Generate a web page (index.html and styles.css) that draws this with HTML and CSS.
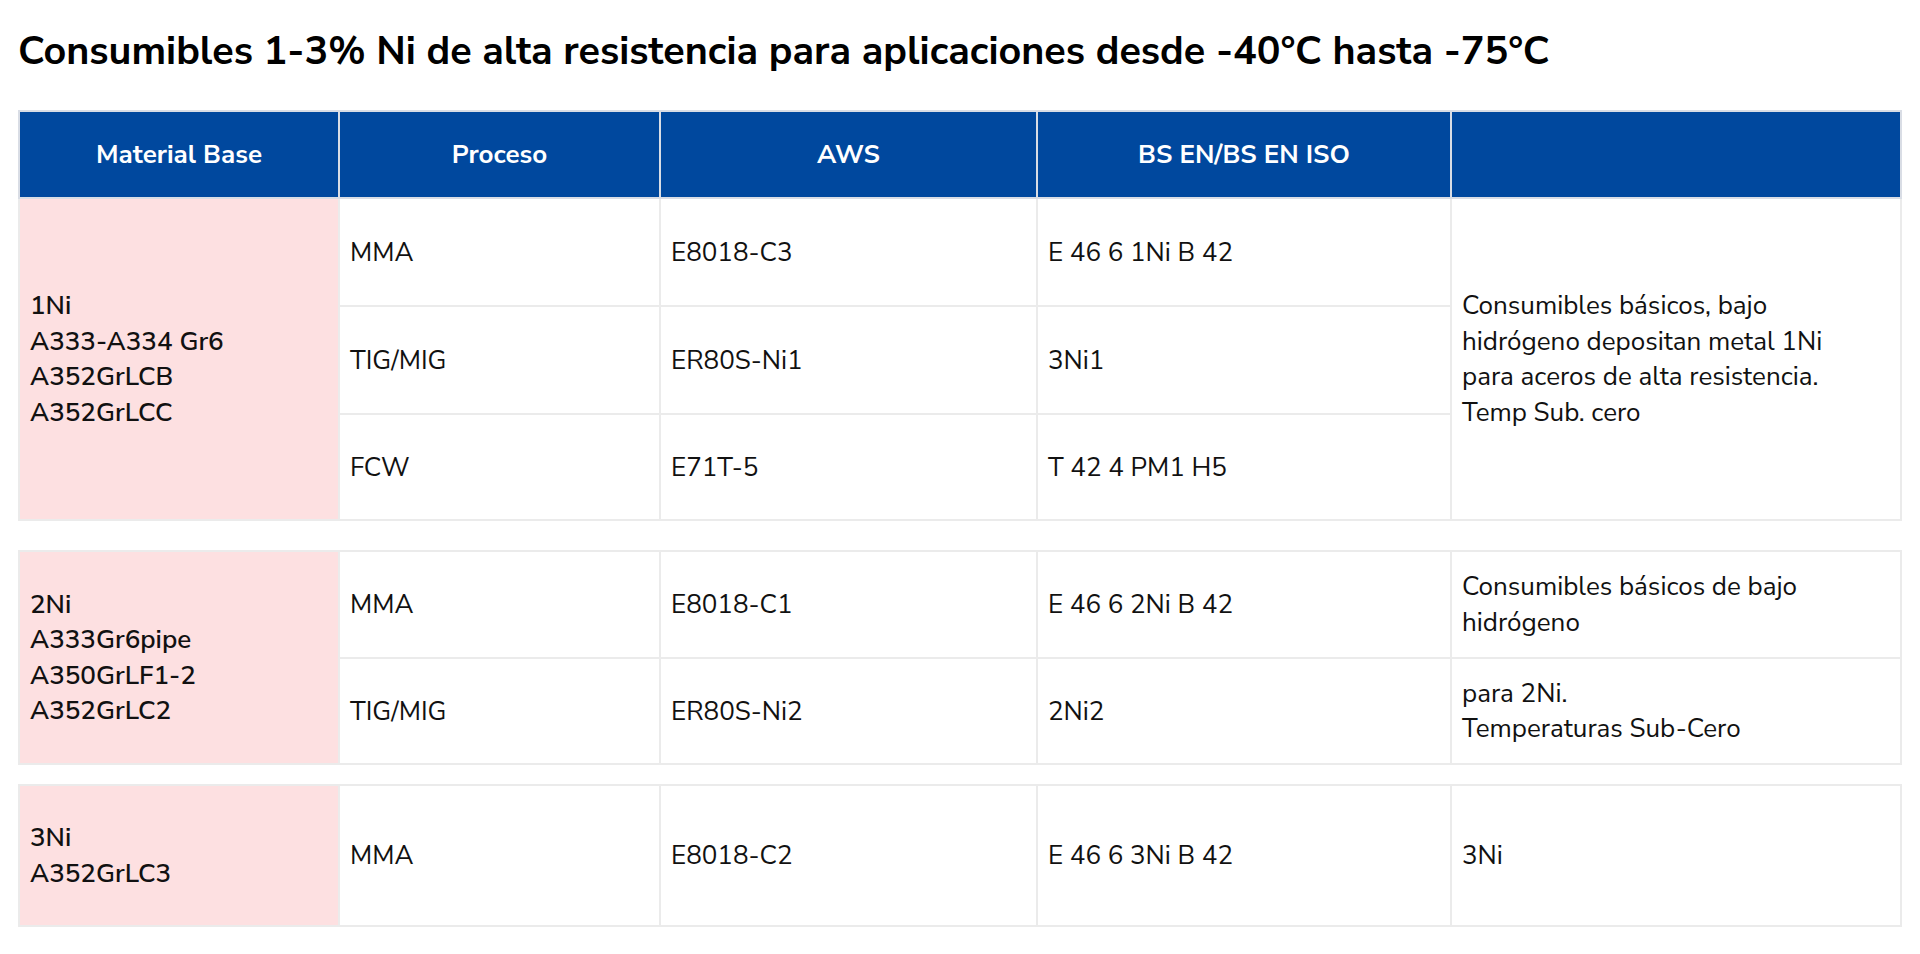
FILE: index.html
```html
<!DOCTYPE html>
<html lang="es">
<head>
<meta charset="utf-8">
<title>Consumibles 1-3% Ni</title>
<link rel="stylesheet" href="styles.css">
</head>
<body>
<main class="page">
  <h1 class="title">Consumibles 1-3% Ni de alta resistencia para aplicaciones desde -40°C hasta -75°C</h1>

  <table class="spec">
    <colgroup>
      <col class="c1"><col class="c2"><col class="c3"><col class="c4"><col class="c5">
    </colgroup>
    <thead>
      <tr class="head-row">
        <th>Material Base</th>
        <th>Proceso</th>
        <th>AWS</th>
        <th>BS EN/BS EN ISO</th>
        <th></th>
      </tr>
    </thead>
    <tbody>
      <tr class="r108">
        <td class="base" rowspan="3">1Ni<br>A333-A334 Gr6<br>A352GrLCB<br>A352GrLCC</td>
        <td>MMA</td>
        <td>E8018-C3</td>
        <td>E 46 6 1Ni B 42</td>
        <td rowspan="3">Consumibles básicos, bajo<br>hidrógeno depositan metal 1Ni<br>para aceros de alta resistencia.<br>Temp Sub. cero</td>
      </tr>
      <tr class="r108">
        <td>TIG/MIG</td>
        <td>ER80S-Ni1</td>
        <td>3Ni1</td>
      </tr>
      <tr class="r106">
        <td>FCW</td>
        <td>E71T-5</td>
        <td>T 42 4 PM1 H5</td>
      </tr>
    </tbody>
  </table>

  <table class="spec group2">
    <colgroup>
      <col class="c1"><col class="c2"><col class="c3"><col class="c4"><col class="c5">
    </colgroup>
    <tbody>
      <tr class="r107">
        <td class="base" rowspan="2">2Ni<br>A333Gr6pipe<br>A350GrLF1-2<br>A352GrLC2</td>
        <td>MMA</td>
        <td>E8018-C1</td>
        <td>E 46 6 2Ni B 42</td>
        <td>Consumibles básicos de bajo<br>hidrógeno</td>
      </tr>
      <tr class="r106">
        <td>TIG/MIG</td>
        <td>ER80S-Ni2</td>
        <td>2Ni2</td>
        <td>para 2Ni.<br>Temperaturas Sub-Cero</td>
      </tr>
    </tbody>
  </table>

  <table class="spec group3">
    <colgroup>
      <col class="c1"><col class="c2"><col class="c3"><col class="c4"><col class="c5">
    </colgroup>
    <tbody>
      <tr class="r141">
        <td class="base">3Ni<br>A352GrLC3</td>
        <td>MMA</td>
        <td>E8018-C2</td>
        <td>E 46 6 3Ni B 42</td>
        <td>3Ni</td>
      </tr>
    </tbody>
  </table>
</main>
</body>
</html>
```

FILE: styles.css
```css
* { box-sizing: border-box; }

html, body {
  margin: 0;
  padding: 0;
  background: #ffffff;
}

body {
  font-family: "Nunito Sans", "Lato", "Noto Sans", sans-serif;
  color: #111111;
}

.page {
  padding: 28px 20px 0 18px;
}

.title {
  margin: 0 0 35px 0;
  font-size: 39.5px;
  line-height: 1.2;
  font-weight: 700;
  color: #000000;
  letter-spacing: 0;
}

.spec {
  width: 100%;
  table-layout: fixed;
  border-collapse: collapse;
  font-size: 26px;
  line-height: 35.5px;
}

.group2 { margin-top: 29px; }
.group3 { margin-top: 19px; }

.c1 { width: 320px; }
.c2 { width: 321px; }
.c3 { width: 377px; }
.c4 { width: 414px; }
.c5 { width: 450px; }

.spec th,
.spec td {
  border: 2px solid #ebebeb;
  padding: 0 10px;
  vertical-align: middle;
  text-align: left;
  font-weight: 400;
}

.head-row { height: 87px; }

.spec th {
  background: #00489e;
  color: #ffffff;
  font-weight: 700;
  text-align: center;
  font-size: 26px;
  border-color: #d9dde5;
}

.spec td.base {
  background: #fde0e1;
  font-weight: 600;
}

.r108 { height: 108px; }
.r107 { height: 107px; }
.r106 { height: 106px; }
.r141 { height: 141px; }
```
